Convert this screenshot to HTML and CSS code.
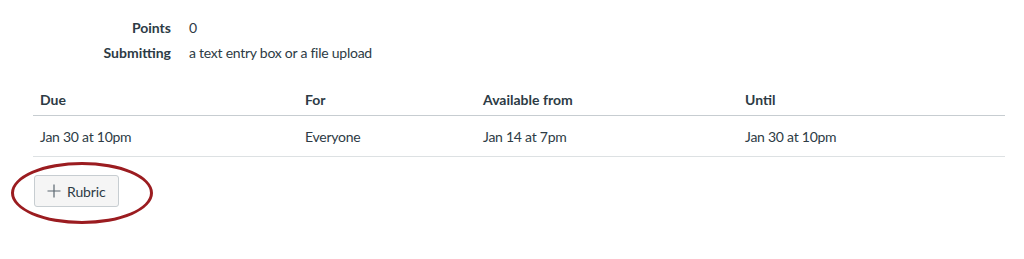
FILE: index.html
```html
<!DOCTYPE html>
<html>
<head>
<meta charset="utf-8">
<link rel="stylesheet" href="styles.css">
</head>
<body>
<div class="page">
  <dl class="details">
    <dt>Points</dt><dd>0</dd>
    <dt>Submitting</dt><dd>a text entry box or a file upload</dd>
  </dl>
  <div class="dates">
    <div class="row head">
      <div>Due</div><div>For</div><div>Available from</div><div>Until</div>
    </div>
    <div class="row">
      <div>Jan 30 at 10pm</div><div>Everyone</div><div>Jan 14 at 7pm</div><div>Jan 30 at 10pm</div>
    </div>
  </div>
  <div class="actions">
    <button class="btn"><svg class="plus" width="14" height="14" viewBox="0 0 14 14"><path d="M7 0.5V13.5M0.5 7H13.5" stroke="#5b6770" stroke-width="1.2" fill="none"/></svg>Rubric</button>
    <span class="ring"></span>
  </div>
</div>
</body>
</html>
```
FILE: styles.css
```css
* { box-sizing: border-box; }
body { margin: 0; background: #fff; font-family: Lato, "Open Sans", sans-serif; color: #2d3b45; font-size: 14px; }
.page { padding: 18px 19px 0 33px; }
.details { display: grid; grid-template-columns: 138px auto; column-gap: 18px; row-gap: 6px; margin: 0; line-height: 19px; }
.details dt { text-align: right; font-weight: 700; }
.details dd { margin: 0; letter-spacing: -0.25px; }
.dates { margin-top: 24px; }
.row { display: grid; grid-template-columns: 265px 178px 262px 1fr; border-bottom: 1px solid #c7cdd1; }
.row > div { padding: 0 7px; }
.row.head { font-weight: 700; height: 30px; line-height: 28px; }
.row:not(.head) { height: 41px; line-height: 41px; border-bottom-color: #dde1e3; letter-spacing: -0.25px; }
.actions { position: relative; margin-top: 18px; height: 60px; }
.btn { display: flex; align-items: center; gap: 6px; margin-left: 1px; width: 85px; height: 32px; padding: 0 10px 0 12px; background: #f5f5f5; border: 1px solid #c7cdd1; border-radius: 3px; font-family: Lato, sans-serif; font-size: 14px; color: #2d3b45; letter-spacing: -0.1px; }
.ring { position: absolute; left: -22px; top: -13px; width: 142px; height: 62px; border: 3px solid #9b1c20; border-radius: 50%; }
```
